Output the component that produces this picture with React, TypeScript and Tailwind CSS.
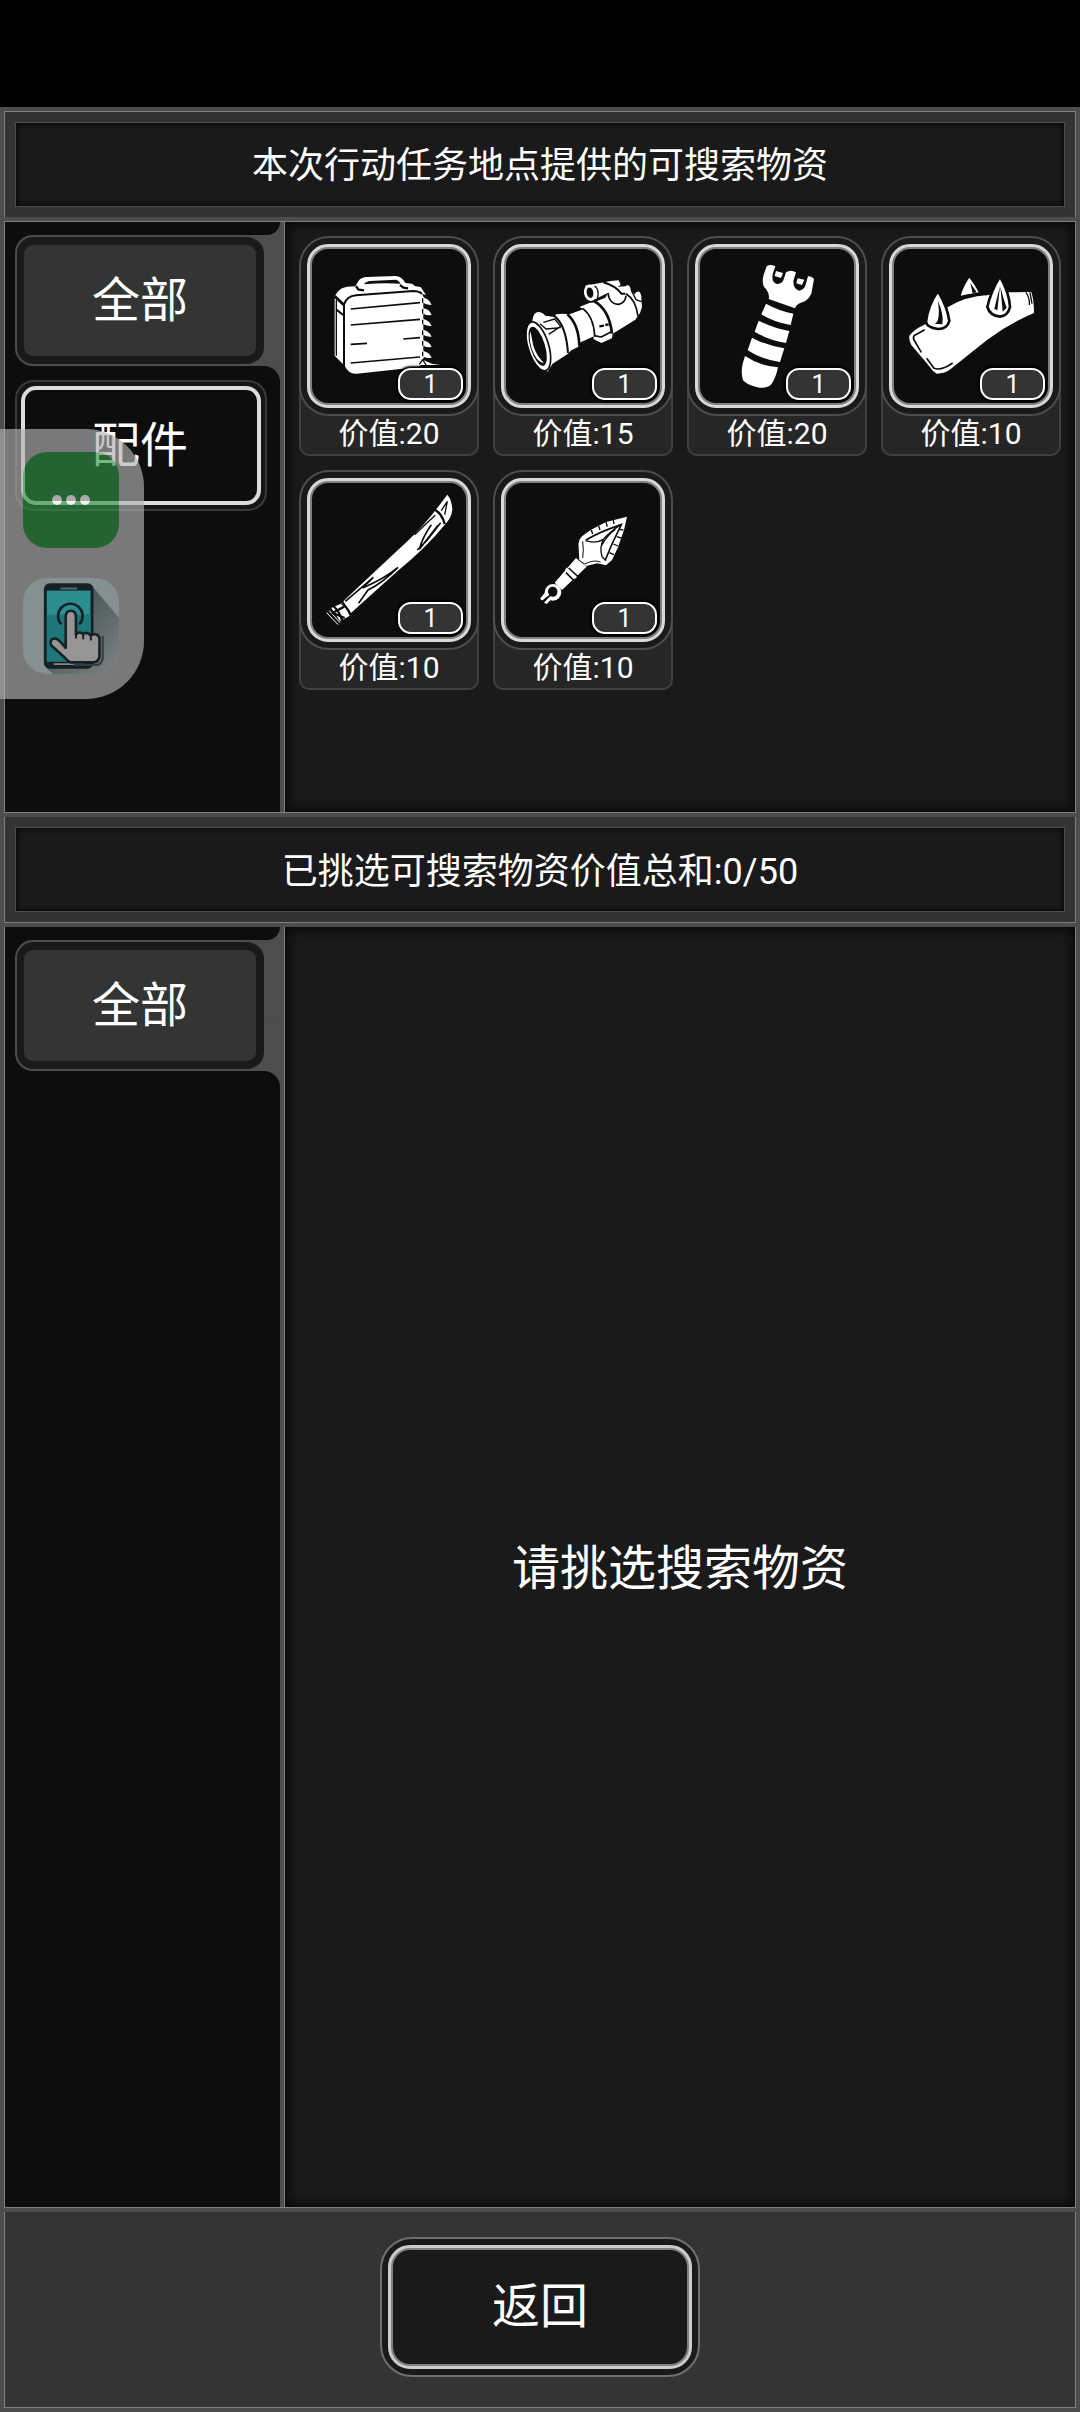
import type { ReactNode } from "react";

const BriefcaseIcon = () => (
  <svg viewBox="66 72 462 462" className="w-full h-full" fill="#fff" strokeLinejoin="round">
    <path d="M134 216 Q140 200 156 190 Q168 184 196 184 L204 170 Q212 156 232 156 L316 153 Q336 154 346 174 L366 176 L376 184 L392 186 L408 210 L396 206 L402 218 Q418 222 425 240 Q412 240 400 234 L400 250 Q418 252 425 270 Q412 272 400 266 L400 282 Q418 286 425 303 Q412 304 400 298 L400 314 Q418 318 425 335 Q412 336 400 330 L400 346 Q418 350 425 366 Q412 368 400 362 L400 378 Q418 382 425 398 Q412 400 402 396 L398 404 L426 416 L450 420 L394 420 Q386 426 366 428 L200 446 Q176 448 164 422 L134 392 Z" />
    <path d="M222 178 Q226 170 240 168 L318 164 Q326 166 332 176 Q280 172 222 178 Z" fill="#0d0d0d" />
    <g stroke="#0d0d0d" fill="none" strokeWidth="6">
      <path d="M162 424 V238 Q170 214 198 211 L370 198 Q386 198 396 206" />
      <path d="M134 214 L162 240" strokeWidth="9" />
      <path d="M139 254 L160 270" strokeWidth="6" />
      <path d="M139 226 V392" strokeWidth="4" />
      <path d="M198 184 L206 194 L222 196 M330 180 L340 188 L354 190" strokeWidth="7" />
      <path d="M182 252 L390 233 M182 300 L390 283 M182 358 L231 355 M340 342 L390 338 M182 414 L390 396" strokeWidth="5" />
      <path d="M398 220 V398" strokeWidth="4" strokeDasharray="14 18" />
      <path d="M388 418 L398 404 L408 420" strokeWidth="4" />
    </g>
  </svg>
);

const ScopeIcon = () => (
  <svg viewBox="66 72 462 462" className="w-full h-full" fill="#fff" strokeLinejoin="round">
    <path d="M146 282 Q148 264 162 261 Q176 262 184 272 L212 276 L216 268 L236 266 L256 268 L300 252 L286 246 L316 234 L330 232 L364 218 L374 202 L398 186 L424 184 L430 180 Q440 182 440 196 L452 208 Q456 198 466 200 Q474 210 472 226 L474 246 L468 264 L454 284 L386 326 L384 340 L352 354 L328 342 L330 334 L290 352 L282 366 L262 376 L252 386 L206 416 L190 440 L160 410 L136 340 Z" />
    <ellipse cx="163" cy="364" rx="31" ry="76" transform="rotate(-17 163 364)" stroke="#0d0d0d" strokeWidth="5" />
    <ellipse cx="161" cy="364" rx="22" ry="61" transform="rotate(-17 161 364)" fill="#0d0d0d" />
    <path d="M139 318 Q132 350 150 388 Q162 412 180 414 Q156 390 148 362 Z" />
    <path d="M304 182 L360 172 L380 168 L404 166 L410 180 L376 202 L334 222 Q318 226 306 214 Z" />
    <ellipse cx="319" cy="203" rx="19" ry="25" transform="rotate(-10 319 203)" />
    <ellipse cx="318" cy="203" rx="10" ry="16" transform="rotate(-10 318 203)" fill="#0d0d0d" />
    <g stroke="#0d0d0d" fill="none" strokeWidth="5">
      <path d="M212 274 Q246 300 252 384" strokeWidth="6" />
      <path d="M250 268 Q284 298 286 362" strokeWidth="8" />
      <path d="M178 292 L212 282 L230 304 L194 328 M168 296 L186 312 L230 308" strokeWidth="4" />
      <path d="M296 250 Q330 276 332 334" strokeWidth="5" />
      <path d="M330 228 Q376 254 384 326" strokeWidth="8" />
      <path d="M330 332 L352 336 L382 320" />
      <path d="M332 182 Q348 196 340 220" strokeWidth="4" />
      <path d="M358 172 Q394 182 412 206 L424 206" strokeWidth="6" />
      <path d="M372 204 Q376 238 404 238 Q424 234 426 212" />
      <path d="M426 206 Q456 224 462 274" />
      <path d="M442 196 L456 224 L472 230" strokeWidth="4" />
      <path d="M346 304 L360 302 M364 300 L374 298" strokeWidth="7" />
    </g>
  </svg>
);

const GripIcon = () => (
  <svg viewBox="66 72 462 462" className="w-full h-full" fill="#fff">
    <path d="M266 124 Q276 116 292 124 L284 148 Q280 172 296 177 Q314 178 318 160 L324 142 Q338 132 354 142 L346 168 Q346 192 362 197 Q376 196 382 182 L390 154 Q400 152 408 162 L400 206 Q394 220 382 228 L362 236 Q354 240 351 250 L272 222 Q276 208 264 192 Q250 182 256 152 Z" />
    <path d="M294 138 L315 144 L309 159 L290 153 Z" />
    <path d="M359 160 L379 164 L372 180 L355 175 Z" />
    <path d="M264 236 Q304 258 346 266 L338 300 Q288 292 250 268 Z" />
    <path d="M242 287 Q286 310 334 318 L324 354 Q272 346 230 320 Z" />
    <path d="M222 338 Q266 362 319 370 L306 411 Q252 404 209 376 Z" />
    <path d="M201 393 Q248 424 300 427 Q294 458 280 478 Q270 490 244 488 Q210 482 195 466 Q188 444 194 416 Z" />
  </svg>
);

const SpikeIcon = () => (
  <svg viewBox="66 72 462 462" className="w-full h-full" fill="#fff">
    <path d="M112 332 Q130 310 156 300 L228 246 Q280 214 348 210 L410 202 L478 201 Q486 226 486 264 Q410 296 346 344 L236 432 Q220 446 194 446 Q182 440 172 424 L118 360 Q110 346 112 332 Z" />
    <path d="M292 158 Q308 178 320 202 L266 214 Q272 186 292 158 Z" />
    <g stroke="#0d0d0d" strokeWidth="8">
      <path d="M198 198 Q226 244 232 288 Q226 312 198 312 Q164 308 162 290 Q168 240 198 198 Z" />
      <path d="M384 154 Q412 204 414 246 Q408 272 384 275 Q354 272 346 246 Q356 200 384 154 Z" />
    </g>
    <g fill="#0d0d0d">
      <path d="M198 228 Q216 268 211 298 L188 296 Q206 290 198 228 Z" />
      <path d="M384 184 Q372 230 367 252 L376 256 Z M385 184 Q394 222 404 248 L392 260 Z" />
      <path d="M295 174 L314 202 L302 205 Z" />
    </g>
    <g stroke="#0d0d0d" fill="none" strokeWidth="5">
      <path d="M262 216 Q300 204 346 208" />
      <path d="M158 314 L126 332 Q122 340 128 348 L148 382" />
      <path d="M164 400 L186 430 Q208 438 242 414" />
      <path d="M462 202 Q474 220 472 240 M474 202 L480 236" strokeWidth="4" />
    </g>
  </svg>
);

const SwordIcon = () => (
  <svg viewBox="66 69 462 462" className="w-full h-full" fill="#fff">
    <path d="M472 104 Q486 120 487 150 Q484 174 466 192 Q412 260 322 334 L182 460 L160 424 Q268 322 352 244 Q402 196 440 146 Z" />
    <path d="M124 444 L156 430 L182 466 L150 484 Z" />
    <path d="M110 458 L144 494 M118 452 L150 488" stroke="#fff" strokeWidth="3" />
    <g stroke="#0d0d0d" fill="none" strokeWidth="5">
      <path d="M436 150 Q456 162 464 192" strokeWidth="7" />
      <path d="M454 152 L472 124 L464 164" strokeWidth="4" />
      <path d="M374 224 L418 182 L436 166" strokeWidth="4" />
      <path d="M424 194 Q398 230 388 268 L444 196 M452 188 L410 242 L382 270" />
      <path d="M166 424 L250 352 L218 384 Q286 354 324 322 Q276 370 234 390 L206 430" />
      <path d="M156 430 Q174 444 182 466 M130 438 Q150 456 156 482 M126 460 L162 440 M126 458 L164 474" strokeWidth="7" />
    </g>
  </svg>
);

const DartIcon = () => (
  <svg viewBox="66 69 462 462" className="w-full h-full" fill="#fff">
    <path d="M429 170 L420 210 L402 262 L384 300 L366 316 L340 310 L306 318 L286 302 L284 264 Q280 236 300 224 L320 210 L366 186 Z" />
    <path d="M276 294 L308 320 L234 390 L212 368 Z" />
    <circle cx="207" cy="397" r="19" fill="none" stroke="#fff" strokeWidth="12" />
    <path d="M186 394 L168 416 L176 422 L190 408 M196 410 L180 428 L188 432 L202 418" />
    <path d="M204 402 L176 424" stroke="#0d0d0d" strokeWidth="5" />
    <circle cx="206" cy="394" r="14" fill="#0d0d0d" />
    <path d="M246 326 L276 354" stroke="#fff" strokeWidth="9" />
    <g stroke="#0d0d0d" fill="none" strokeWidth="4">
      <path d="M246 338 L268 360 M254 324 L280 348" strokeWidth="5" />
      <path d="M306 240 Q350 214 412 194 L384 252 L364 300" strokeWidth="5" />
      <path d="M410 194 Q378 216 358 238 Q336 252 304 242" />
      <path d="M358 238 Q346 262 354 290 L366 302 M394 208 Q370 224 352 258" />
      <path d="M322 210 L326 222 M344 198 L348 210 M366 186 L370 200 M388 180 L390 192 M418 210 L406 208 M412 234 L398 230 M402 258 L388 252 M390 284 L376 278" />
      <path d="M296 244 Q300 270 296 294 M284 300 L302 312 Q330 298 350 306" strokeWidth="3" />
    </g>
  </svg>
);

const TapPhoneIcon = () => (
  <svg viewBox="69 625 290 290" className="w-full h-full">
    <defs>
      <linearGradient id="shade" x1="0.3" y1="0.1" x2="1" y2="0.9">
        <stop offset="0" stopColor="#5d7478" />
        <stop offset="1" stopColor="#b5bfbf" />
      </linearGradient>
    </defs>
    <rect x="69" y="625" width="290" height="290" fill="#c4d8d6" />
    <path d="M278 650 L359 745 V915 H160 L140 898 Z" fill="url(#shade)" />
    <rect x="132" y="641" width="150" height="258" rx="18" fill="#1c2c33" />
    <rect x="141" y="663" width="132" height="214" fill="#3dd3d6" />
    <path d="M141 735 H273 V877 H141 Z" fill="#2ab0b5" />
    <path d="M182 657 H232" stroke="#8c9698" strokeWidth="6" />
    <path d="M162 885 H250" stroke="#c8cccc" strokeWidth="5" />
    <path d="M185 765 A37 37 0 1 1 239 765" fill="none" stroke="#1c2c33" strokeWidth="8" />
    <path d="M310 800 V866 Q308 886 290 888 H222" fill="none" stroke="#43585e" strokeWidth="6" />
    <path
      d="M198 836 V740 Q200 724 213 724 Q228 724 229 740 V796 Q238 784 250 794 Q262 786 273 798 Q296 788 300 808 V862 Q298 880 280 880 H214 Q204 878 198 868 L154 828 Q148 812 162 808 Q172 806 182 818 Z"
      fill="#dedede"
      stroke="#1c2c33"
      strokeWidth="8"
      strokeLinejoin="round"
    />
    <path d="M229 790 V808 M251 794 V810 M274 798 V814" stroke="#1c2c33" strokeWidth="6" />
  </svg>
);

const items: { icon: ReactNode; value: number; count: number }[] = [
  { icon: <BriefcaseIcon />, value: 20, count: 1 },
  { icon: <ScopeIcon />, value: 15, count: 1 },
  { icon: <GripIcon />, value: 20, count: 1 },
  { icon: <SpikeIcon />, value: 10, count: 1 },
  { icon: <SwordIcon />, value: 10, count: 1 },
  { icon: <DartIcon />, value: 10, count: 1 },
];

function TitleBox({ children }: { children: ReactNode }) {
  return (
    <div className="h-[85px] border border-[#4d4d4d] bg-[#1a1a1a] shadow-[inset_0_0_5px_1px_#060606] flex items-center justify-center text-4xl pt-0.5">
      {children}
    </div>
  );
}

function SideColumn({ children }: { children?: ReactNode }) {
  return (
    <div className="w-[275px] shrink-0 flex flex-col">
      <div className="h-[13px] bg-[#0d0d0d] rounded-br-[16px]" />
      {/* active tab merges into the divider on the right */}
      <div className="bg-linear-to-r from-[#0d0d0d] from-50% to-[#4d4d4d] to-50% pl-2.5">
        <div className="w-[249px] h-[131px] rounded-[18px] border-2 border-r-0 border-[#4d4d4d] bg-[#1a1a1a] pl-[7px] pr-2 py-2">
          <div className="h-full rounded-[9px] bg-[#333434] flex items-center justify-center text-5xl">
            全部
          </div>
        </div>
      </div>
      <div className="flex-1 bg-[#0d0d0d] rounded-tr-[16px] pl-2.5 pt-3.5">{children}</div>
    </div>
  );
}

function ItemCard({ icon, value, count }: { icon: ReactNode; value: number; count: number }) {
  return (
    <div className="relative w-[180px] h-[220px]">
      <div className="absolute inset-x-0 bottom-0 h-[70px] rounded-b-[10px] border-2 border-t-0 border-[#404040] bg-[#262626]" />
      <div className="relative h-[180px] rounded-[30px] border-2 border-[#4d4d4d] bg-[#1a1a1a] p-1.5">
        <div className="h-full rounded-[21px] border-3 border-[#d8d8d8] bg-[#808080] p-0.5">
          <div className="h-full rounded-[16px] bg-[#0d0d0d] overflow-hidden">{icon}</div>
        </div>
        <div className="absolute left-[97px] top-[130px] w-[65px] h-8 rounded-[13px] border-2 border-white bg-[#333434] shadow-[0_0_2px_2px_#000] flex items-center justify-center text-[25px] leading-none">
          {count}
        </div>
      </div>
      <div className="relative h-[36px] flex items-center justify-center text-[30px] leading-none">
        价值:{value}
      </div>
    </div>
  );
}

export default function App() {
  return (
    <div className="relative w-[1080px] h-[2412px] flex flex-col bg-[#4d4d4d] text-white font-['Roboto','Noto_Sans_CJK_SC',sans-serif] overflow-hidden">
      <div className="h-[107px] shrink-0 bg-black" />

      <div className="flex-1 flex flex-col gap-1 p-1">
        <header className="h-[106px] border border-b-0 border-[#808080] bg-[#333333] p-2.5">
          <TitleBox>本次行动任务地点提供的可搜索物资</TitleBox>
        </header>

        {/* Available supplies */}
        <section className="h-[592px] border border-[#808080] flex gap-1">
          <SideColumn>
            <div className="w-[252px] h-[131px] rounded-[19px] border-2 border-[#3a3a3a] bg-[#161616] py-1 pl-1 pr-1">
              <div className="h-full w-[240px] rounded-[15px] border-4 border-[#dcdcdc] bg-[#0d0d0d] flex items-center justify-center text-5xl pr-0.5">
                配件
              </div>
            </div>
          </SideColumn>
          <div className="flex-1 border-l border-[#808080] bg-[#1a1a1a] shadow-[inset_0_0_12px_2px_#060606] p-3.5">
            <div className="grid grid-cols-4 gap-3.5">
              {items.map((item, i) => (
                <ItemCard key={i} {...item} />
              ))}
            </div>
          </div>
        </section>

        <header className="h-[106px] border border-t-0 border-[#808080] bg-[#333333] p-2.5">
          <TitleBox>
            <span className="pt-0.5">已挑选可搜索物资价值总和:0/50</span>
          </TitleBox>
        </header>

        {/* Picked supplies */}
        <section className="h-[1281px] border border-t-0 border-[#808080] flex gap-1">
          <SideColumn />
          <div className="flex-1 border-l border-[#808080] bg-[#1a1a1a] shadow-[inset_0_0_12px_2px_#060606] flex items-center justify-center text-5xl pt-[3px]">
            请挑选搜索物资
          </div>
        </section>

        <footer className="h-[196px] border border-t-0 border-[#808080] bg-[#333434] flex justify-center pt-[25px]">
          <button className="w-80 h-[140px] rounded-[32px] border-2 border-[#707070] bg-[#1a1a1a] p-1.5">
            <div className="h-full rounded-[22px] border-3 border-[#cccccc] bg-[#808080] p-0.5">
              <div className="h-full rounded-[17px] bg-[#1a1a1a] flex items-center justify-center text-5xl">
                返回
              </div>
            </div>
          </button>
        </footer>
      </div>

      {/* Floating system dock */}
      <div className="absolute left-0 top-[429px] w-36 h-[270px] rounded-r-[58px] bg-[#b3b3b3] opacity-65 pl-[23px] pt-[23px] flex flex-col gap-[30px]">
        <div className="size-24 rounded-[24px] bg-[#339347] flex items-center justify-center gap-1">
          <span className="size-2.5 rounded-full bg-white" />
          <span className="size-2.5 rounded-full bg-white" />
          <span className="size-2.5 rounded-full bg-white" />
        </div>
        <div className="size-24 rounded-[24px] overflow-hidden">
          <TapPhoneIcon />
        </div>
      </div>
    </div>
  );
}
